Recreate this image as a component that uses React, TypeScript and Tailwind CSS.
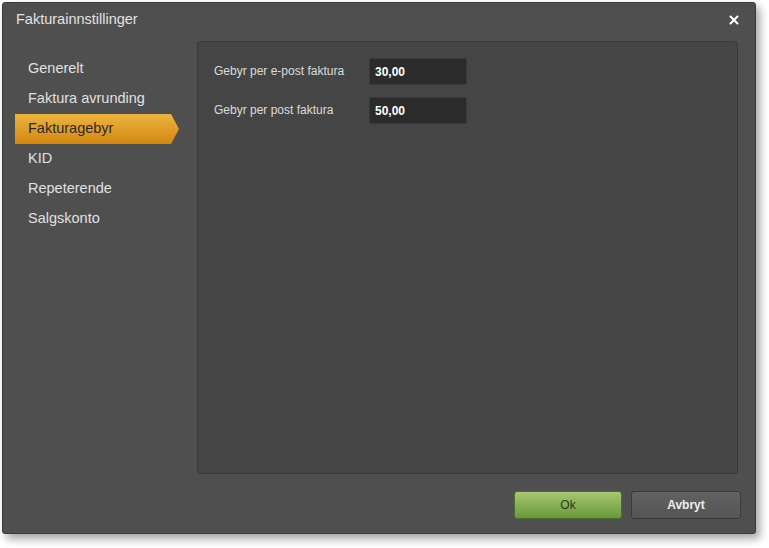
import { useState } from 'react'
import { X } from 'lucide-react'

const items = ['Generelt', 'Faktura avrunding', 'Fakturagebyr', 'KID', 'Repeterende', 'Salgskonto']

export default function App() {
  const [active, setActive] = useState('Fakturagebyr')
  const [epost, setEpost] = useState('30,00')
  const [post, setPost] = useState('50,00')

  return (
    <div className="min-h-screen bg-white p-[2px] font-['Liberation_Sans',Arial,sans-serif]">
      <div className="w-[754px] h-[532px] bg-[#4f4f4f] border border-[#3c3c3c] rounded-[3px] shadow-[4px_5px_8px_rgba(0,0,0,0.35)] flex flex-col">
        {/* Tittel */}
        <div className="h-[38px] flex items-start justify-between pl-[13px] pr-[14px] pt-[6px]">
          <span className="text-[14.5px] text-[#e2e2e2]">Fakturainnstillinger</span>
          <X size={14} strokeWidth={3.5} className="text-white mt-[4px]" />
        </div>

        <div className="flex h-[433px]">
          {/* Meny */}
          <div className="w-[194px] pl-[12px] pt-[13px]">
            {items.map((it) => (
              <button
                key={it}
                onClick={() => setActive(it)}
                className={
                  it === active
                    ? 'block w-[164px] h-[30px] text-left pl-[13px] text-[14.5px] text-[#2a2a2a] bg-gradient-to-b from-[#ecb43e] to-[#d3870a] [clip-path:polygon(0_0,156px_0,164px_50%,156px_100%,0_100%)]'
                    : 'block w-[164px] h-[30px] text-left pl-[13px] text-[14.5px] text-[#e0e0e0]'
                }
              >
                {it}
              </button>
            ))}
          </div>

          {/* Innhold */}
          <div className="flex-1 mr-[17px] bg-[#454545] border border-[#3a3a3a] rounded-[3px] pt-[16px] pl-[16px] space-y-[12px]">
            <div className="flex items-center">
              <label className="w-[155px] text-[12px] text-[#dcdcdc] -mt-[2px]">Gebyr per e-post faktura</label>
              <input
                value={epost}
                onChange={(e) => setEpost(e.target.value)}
                className="w-[98px] h-[27px] px-[5px] bg-[#2b2b2b] border border-[#3a3a3a] rounded-[2px] text-[12px] font-bold text-white outline-none"
              />
            </div>
            <div className="flex items-center">
              <label className="w-[155px] text-[12px] text-[#dcdcdc] -mt-[2px]">Gebyr per post faktura</label>
              <input
                value={post}
                onChange={(e) => setPost(e.target.value)}
                className="w-[98px] h-[27px] px-[5px] bg-[#2b2b2b] border border-[#3a3a3a] rounded-[2px] text-[12px] font-bold text-white outline-none"
              />
            </div>
          </div>
        </div>

        {/* Knapper */}
        <div className="flex justify-end gap-[9px] pt-[17px] pr-[14px]">
          <button className="w-[108px] h-[28px] rounded-[3px] border border-[#4c6e2c] bg-gradient-to-b from-[#a6c871] to-[#699a3a] text-[12px] text-[#2a3a1a]">
            Ok
          </button>
          <button className="w-[110px] h-[28px] rounded-[3px] border border-[#3a3a3a] bg-gradient-to-b from-[#626262] to-[#555555] text-[12px] font-bold text-[#eeeeee]">
            Avbryt
          </button>
        </div>
      </div>
    </div>
  )
}
